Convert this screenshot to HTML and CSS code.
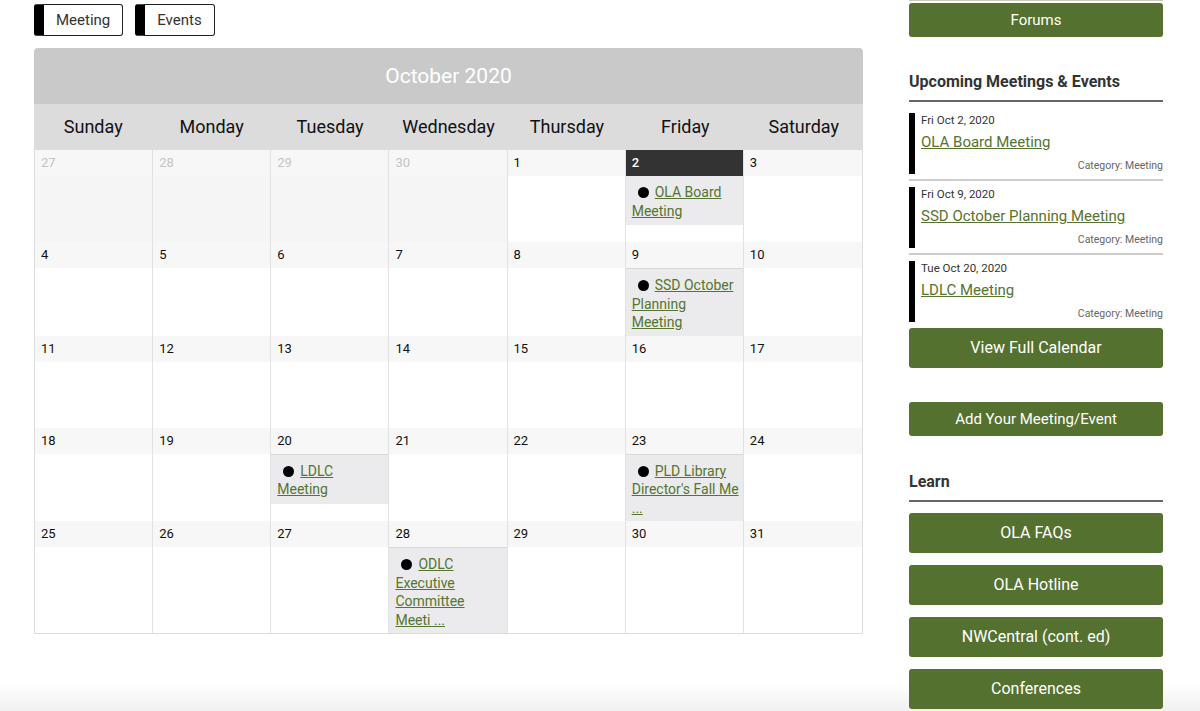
FILE: index.html
```html
<!DOCTYPE html>
<html lang="en">
<head>
  <meta charset="UTF-8" />
  <meta name="viewport" content="width=device-width, initial-scale=1.0" />
  <title>Calendar</title>
  <link rel="stylesheet" href="styles.css">
</head>
<body>
  <div class="page">
    <main class="main">
      <div class="filters">
        <button class="filter">Meeting</button>
        <button class="filter">Events</button>
      </div>

      <section class="calendar">
        <div class="cal-title">October 2020</div>
        <div class="cal-days">
          <div>Sunday</div><div>Monday</div><div>Tuesday</div><div>Wednesday</div>
          <div>Thursday</div><div>Friday</div><div>Saturday</div>
        </div>

        <div class="cal-body">
          <div class="cal-week">
            <div class="cal-cell other"><div class="cal-num">27</div></div>
            <div class="cal-cell other"><div class="cal-num">28</div></div>
            <div class="cal-cell other"><div class="cal-num">29</div></div>
            <div class="cal-cell other"><div class="cal-num">30</div></div>
            <div class="cal-cell"><div class="cal-num">1</div></div>
            <div class="cal-cell today">
              <div class="cal-num">2</div>
              <div class="cal-event"><span class="dot"></span><a href="#">OLA Board<br>Meeting</a></div>
            </div>
            <div class="cal-cell"><div class="cal-num">3</div></div>
          </div>

          <div class="cal-week">
            <div class="cal-cell"><div class="cal-num">4</div></div>
            <div class="cal-cell"><div class="cal-num">5</div></div>
            <div class="cal-cell"><div class="cal-num">6</div></div>
            <div class="cal-cell"><div class="cal-num">7</div></div>
            <div class="cal-cell"><div class="cal-num">8</div></div>
            <div class="cal-cell">
              <div class="cal-num">9</div>
              <div class="cal-event fill"><span class="dot"></span><a href="#">SSD October<br>Planning<br>Meeting</a></div>
            </div>
            <div class="cal-cell"><div class="cal-num">10</div></div>
          </div>

          <div class="cal-week">
            <div class="cal-cell"><div class="cal-num">11</div></div>
            <div class="cal-cell"><div class="cal-num">12</div></div>
            <div class="cal-cell"><div class="cal-num">13</div></div>
            <div class="cal-cell"><div class="cal-num">14</div></div>
            <div class="cal-cell"><div class="cal-num">15</div></div>
            <div class="cal-cell"><div class="cal-num">16</div></div>
            <div class="cal-cell"><div class="cal-num">17</div></div>
          </div>

          <div class="cal-week">
            <div class="cal-cell"><div class="cal-num">18</div></div>
            <div class="cal-cell"><div class="cal-num">19</div></div>
            <div class="cal-cell">
              <div class="cal-num">20</div>
              <div class="cal-event"><span class="dot"></span><a href="#">LDLC<br>Meeting</a></div>
            </div>
            <div class="cal-cell"><div class="cal-num">21</div></div>
            <div class="cal-cell"><div class="cal-num">22</div></div>
            <div class="cal-cell">
              <div class="cal-num">23</div>
              <div class="cal-event fill"><span class="dot"></span><a href="#">PLD Library<br>Director's Fall Me<br>...</a></div>
            </div>
            <div class="cal-cell"><div class="cal-num">24</div></div>
          </div>

          <div class="cal-week">
            <div class="cal-cell"><div class="cal-num">25</div></div>
            <div class="cal-cell"><div class="cal-num">26</div></div>
            <div class="cal-cell"><div class="cal-num">27</div></div>
            <div class="cal-cell">
              <div class="cal-num">28</div>
              <div class="cal-event fill"><span class="dot"></span><a href="#">ODLC<br>Executive<br>Committee<br>Meeti ...</a></div>
            </div>
            <div class="cal-cell"><div class="cal-num">29</div></div>
            <div class="cal-cell"><div class="cal-num">30</div></div>
            <div class="cal-cell"><div class="cal-num">31</div></div>
          </div>
        </div>
      </section>
    </main>

    <aside class="sidebar">
      <div class="cut"></div>
      <a class="btn small" href="#">Forums</a>

      <h3 class="side-title">Upcoming Meetings &amp; Events</h3>
      <div class="upcoming">
        <div class="up-item">
          <div class="up-body">
            <div class="up-date">Fri Oct 2, 2020</div>
            <a class="up-link" href="#">OLA Board Meeting</a>
            <div class="up-cat">Category: Meeting</div>
          </div>
        </div>
        <div class="up-item">
          <div class="up-body">
            <div class="up-date">Fri Oct 9, 2020</div>
            <a class="up-link" href="#">SSD October Planning Meeting</a>
            <div class="up-cat">Category: Meeting</div>
          </div>
        </div>
        <div class="up-item last">
          <div class="up-body">
            <div class="up-date">Tue Oct 20, 2020</div>
            <a class="up-link" href="#">LDLC Meeting</a>
            <div class="up-cat">Category: Meeting</div>
          </div>
        </div>
      </div>
      <a class="btn" href="#">View Full Calendar</a>
      <a class="btn small add" href="#">Add Your Meeting/Event</a>

      <h3 class="side-title learn">Learn</h3>
      <div class="btn-list">
        <a class="btn" href="#">OLA FAQs</a>
        <a class="btn" href="#">OLA Hotline</a>
        <a class="btn" href="#">NWCentral (cont. ed)</a>
        <a class="btn" href="#">Conferences</a>
      </div>
    </aside>
  </div>
</body>
</html>
```

FILE: styles.css
```css
html {
  min-height: 100%;
  background: linear-gradient(to bottom, #fff calc(100% - 28px), #f0f0f0);
}
body {
  font-family: Roboto, 'Liberation Sans', sans-serif;
  margin: 0;
  padding: 0;
  color: #222;
}
.page {
  display: flex;
  gap: 46px;
  padding-left: 34px;
}
.main {
  width: 829px;
}
.filters {
  display: flex;
  gap: 12px;
  margin-top: 4px;
}
.filter {
  font-family: inherit;
  font-size: 15px;
  color: #333;
  background: #fff;
  height: 32px;
  padding: 0 12px;
  border: 1px solid #222;
  border-left: 10px solid #000;
  border-radius: 3px;
}
.calendar {
  margin-top: 12px;
}
.cal-title {
  background: #c9c9c9;
  color: #fff;
  font-size: 21px;
  height: 56px;
  line-height: 56px;
  text-align: center;
  border-radius: 4px 4px 0 0;
}
.cal-days {
  display: grid;
  grid-template-columns: repeat(7, 1fr);
  background: #dcdcdc;
  height: 46px;
  line-height: 46px;
  text-align: center;
  font-size: 18px;
  color: #111;
}
.cal-body {
  border: 1px solid #ddd;
  border-top: none;
}
.cal-week {
  display: grid;
  grid-template-columns: repeat(7, 1fr);
  min-height: 92px;
}
.cal-week:nth-child(2), .cal-week:nth-child(4) {
  min-height: 93px;
}
.cal-cell {
  border-right: 1px solid #e2e2e2;
  display: flex;
  flex-direction: column;
}
.cal-cell:last-child {
  border-right: none;
}
.cal-num {
  background: #f7f7f7;
  height: 26px;
  line-height: 26px;
  padding-left: 6px;
  font-size: 13px;
  color: #111;
}
.cal-cell.other {
  background: #f5f5f5;
}
.cal-cell.other .cal-num {
  color: #c4c4c4;
}
.cal-cell.today .cal-num {
  background: #333;
  color: #fff;
  font-weight: 500;
}
.cal-event {
  background: #ebebed;
  border-top: 1px solid #d8d8d8;
  padding: 7px 0 5px 6px;
  font-size: 14px;
  line-height: 18.5px;
  white-space: nowrap;
}
.cal-cell.today .cal-event {
  border-top: none;
}
.cal-event.fill {
  flex: 1;
  padding-bottom: 4px;
}
.cal-event a, .up-link {
  color: #55742f;
  text-decoration: underline;
}
.dot {
  display: inline-block;
  width: 11px;
  height: 11px;
  border-radius: 50%;
  background: #000;
  margin: 0 6px;
  vertical-align: -1px;
}
.sidebar {
  width: 254px;
}
.cut {
  height: 1px;
  background: #c9cdb8;
  margin-bottom: 2px;
}
.btn {
  display: block;
  background: #55712f;
  color: #fff;
  text-decoration: none;
  text-align: center;
  border-radius: 3px;
  height: 40px;
  line-height: 40px;
  font-size: 16px;
}
.btn.small {
  height: 34px;
  line-height: 34px;
  font-size: 15px;
}
.btn.add {
  margin-top: 34px;
}
.side-title {
  margin: 35px 0 0;
  font-size: 16px;
  line-height: 20px;
  color: #333;
  padding-bottom: 8px;
  border-bottom: 2px solid #666;
}
.side-title.learn {
  margin-top: 36px;
}
.upcoming {
  margin-top: 11px;
}
.up-item {
  padding-bottom: 5px;
  border-bottom: 2px solid #ccc;
  margin-bottom: 6px;
}
.up-item.last {
  border-bottom: none;
  padding-bottom: 0;
  margin-bottom: 6px;
}
.up-body {
  border-left: 6px solid #000;
  padding-left: 6px;
  height: 61px;
}
.up-date {
  font-size: 11.5px;
  line-height: 14px;
  color: #333;
}
.up-link {
  display: inline-block;
  font-size: 15px;
  line-height: 20px;
  margin-top: 5px;
}
.up-cat {
  text-align: right;
  font-size: 10.5px;
  line-height: 12px;
  color: #666;
  margin-top: 8px;
}
.btn-list {
  margin-top: 11px;
  display: flex;
  flex-direction: column;
  gap: 12px;
}
```
